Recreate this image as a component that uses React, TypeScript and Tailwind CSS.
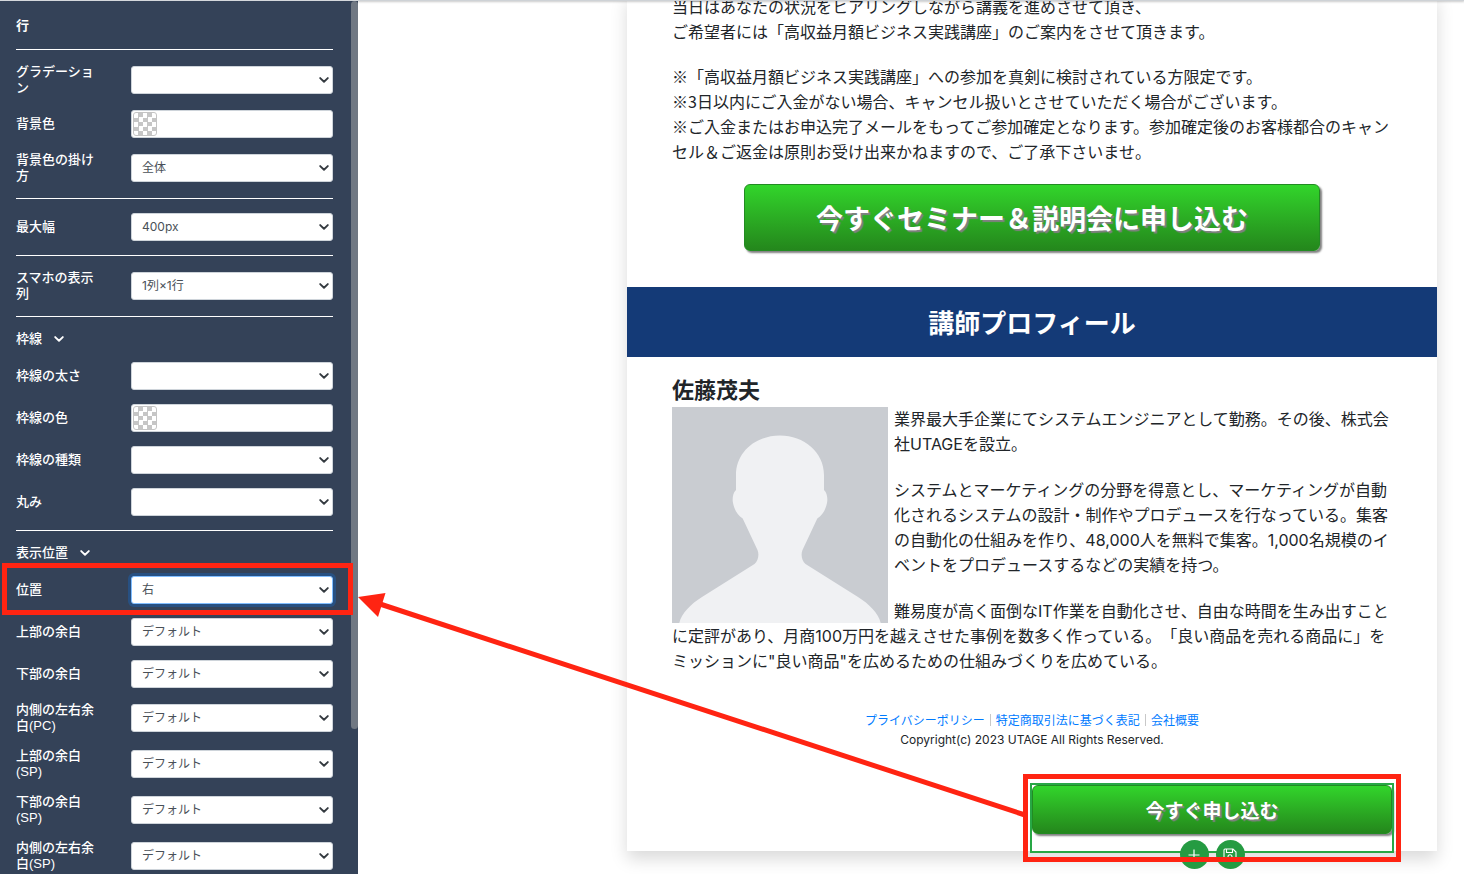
import { ReactNode, useState } from 'react'

const deviceDefault = ['デフォルト', '0px', '10px', '20px', '30px']

function Chevron({ className }: { className: string }) {
    return (
        <svg viewBox="0 0 10 6" fill="none" stroke="currentColor" strokeWidth="1.900" strokeLinecap="round" strokeLinejoin="round" className={className} aria-hidden="true">
            <path d="M1.2 1.1 5 4.7 8.8 1.1" />
        </svg>
    )
}

type FieldProps = {
    id: string
    label: string
    children: ReactNode
    marked?: boolean
}

function Field({ id, label, children, marked }: FieldProps) {
    return (
        <div className="relative mb-3.5 flex items-center">
            <label htmlFor={id} className="w-[115px] shrink-0 pr-9 text-[13px] leading-4 font-medium">{label}</label>
            <div className="relative min-w-0 flex-1">{children}</div>
            {marked && (
                <span className="pointer-events-none absolute -top-[13px] -right-5 -bottom-[11px] -left-3.5 z-20 border-5 border-[#ff2412]" />
            )}
        </div>
    )
}

type SelectFieldProps = {
    id: string
    label: string
    options: string[]
    active?: boolean
}

function SelectField({ id, label, options, active }: SelectFieldProps) {
    const [value, setValue] = useState(options[0])

    return (
        <Field id={id} label={label} marked={active}>
            <select
                id={id}
                value={value}
                onChange={(e) => setValue(e.target.value)}
                className={active
                    ? "block h-7 w-full appearance-none rounded-[3px] border border-[#80bdff] bg-white pr-6 pl-2.5 font-['Inter','Noto_Sans_CJK_JP',sans-serif] text-xs text-[#495057] ring-3 ring-[#007bff]/25 outline-none"
                    : "block h-7 w-full appearance-none rounded-[3px] border border-[#ced4da] bg-white pr-6 pl-2.5 font-['Inter','Noto_Sans_CJK_JP',sans-serif] text-xs text-[#495057] outline-none"}
            >
                {options.map((option) => (
                    <option key={option} value={option}>{option}</option>
                ))}
            </select>
            <Chevron className="pointer-events-none absolute top-[11px] right-1 h-1.5 w-2.5 text-[#343a40]" />
        </Field>
    )
}

function ColorField({ id, label }: { id: string, label: string }) {
    return (
        <Field id={id} label={label}>
            <input id={id} type="text" className="block h-7 w-full rounded-[3px] border border-[#ced4da] bg-white pr-2.5 pl-8 text-xs text-[#495057] outline-none" />
            <button
                type="button"
                aria-label={`${label}を選択`}
                className="absolute top-0.5 left-0.5 size-6 rounded-[3px] border border-[#c4c4c4] bg-[repeating-conic-gradient(#c6c6c6_0_25%,#fff_0_50%)] bg-[length:9px_9px]"
            />
        </Field>
    )
}

function Divider() {
    return <hr className="mb-3.5 border-t border-white" />
}

function GroupHeading({ children }: { children: ReactNode }) {
    return (
        <h3 className="mb-[15px] text-[13px] leading-4 font-medium">
            <button type="button" className="flex items-center gap-3">
                {children}
                <Chevron className="h-1.5 w-2.5" />
            </button>
        </h3>
    )
}

function Sidebar() {
    return (
        <aside className="relative h-screen w-[358px] shrink-0 overflow-hidden border-t border-[#d5d8dc] bg-[#344258] pt-[17px] pr-[25px] pl-4 font-['Liberation_Sans','Noto_Sans_CJK_JP',sans-serif] text-white">
            <h2 className="mb-[15px] text-[13px] leading-4 font-bold">行</h2>
            <Divider />
            <SelectField id="gradation" label="グラデーション" options={['', 'あり']} />
            <ColorField id="bg-color" label="背景色" />
            <SelectField id="bg-area" label="背景色の掛け方" options={['全体', '内側']} />
            <Divider />
            <SelectField id="max-width" label="最大幅" options={['400px', '600px', '800px']} />
            <Divider />
            <SelectField id="sp-columns" label="スマホの表示列" options={['1列×1行', '2列×1行']} />
            <Divider />
            <GroupHeading>枠線</GroupHeading>
            <SelectField id="border-width" label="枠線の太さ" options={['', '1px', '2px']} />
            <ColorField id="border-color" label="枠線の色" />
            <SelectField id="border-style" label="枠線の種類" options={['', '実線', '点線']} />
            <SelectField id="radius" label="丸み" options={['', '5px', '10px']} />
            <Divider />
            <GroupHeading>表示位置</GroupHeading>
            <SelectField id="align" label="位置" options={['右', '中央', '左']} active />
            <SelectField id="mt-pc" label="上部の余白" options={deviceDefault} />
            <SelectField id="mb-pc" label="下部の余白" options={deviceDefault} />
            <SelectField id="px-pc" label="内側の左右余白(PC)" options={deviceDefault} />
            <SelectField id="mt-sp" label="上部の余白(SP)" options={deviceDefault} />
            <SelectField id="mb-sp" label="下部の余白(SP)" options={deviceDefault} />
            <SelectField id="px-sp" label="内側の左右余白(SP)" options={deviceDefault} />
            {/* scroll thumb */}
            <div className="absolute top-0 right-0 h-[728px] w-[7px] rounded-full bg-[#707883]" />
        </aside>
    )
}

function Avatar() {
    return (
        <svg viewBox="0 0 216 216" className="float-left mr-1.5 size-[216px]" role="img" aria-label="佐藤茂夫">
            <rect width="216" height="216" fill="#c9ccd1" />
            <path
                d="M108 28.5C84 28.5 64 45 64 68V83C61 86 60.5 90 60.7 94C61.5 101 65 108 70.7 111.5L85.5 143C87.5 148 86 154 82.5 157L30 190C19 197 9.500 206 7.300 216H208.700C206.500 206 197 197 186 190L133.500 157C130 154 128.500 148 130.500 143L145.300 111.500C151 108 154.500 101 155.300 94C155.500 90 155 86 152 83V68C152 45 132 28.500 108 28.500Z"
                fill="#f0f1f3"
            />
        </svg>
    )
}

function Preview() {
    return (
        <main className="relative flex h-screen min-w-0 flex-1 items-start justify-end overflow-hidden pr-[27px] pl-4">
            <div className="absolute inset-x-0 top-0 z-10 h-px bg-[#ced2d6] shadow-[0_1px_2px_rgba(0,0,0,0.3)]" />
            <article className="-mt-1.5 w-full max-w-[810px] bg-white text-base leading-[25px] text-[#212529] shadow-[0_8px_16px_rgba(0,0,0,0.15)] [text-spacing-trim:space-all]">
                <section className="px-[45px]">
                    <p className="mb-5">
                        当日はあなたの状況をヒアリングしながら講義を進めさせて頂き、<br />
                        ご希望者には「高収益月額ビジネス実践講座」のご案内をさせて頂きます。
                    </p>
                    <p>
                        ※「高収益月額ビジネス実践講座」への参加を真剣に検討されている方限定です。<br />
                        ※3日以内にご入金がない場合、キャンセル扱いとさせていただく場合がございます。<br />
                        ※ご入金またはお申込完了メールをもってご参加確定となります。参加確定後のお客様都合のキャンセル＆ご返金は原則お受け出来かねますので、ご了承下さいませ。
                    </p>
                    <button
                        type="button"
                        className="mx-auto mt-5 mb-9 block h-[67px] w-4/5 rounded-md border border-[#228b22] bg-linear-to-b from-[#32d52b] to-[#24871c] text-[27px] leading-none font-bold text-white shadow-[2px_2px_2px_#808080] [text-shadow:2px_2px_1px_#808080]"
                    >
                        今すぐセミナー＆説明会に申し込む
                    </button>
                </section>

                <h2 className="flex h-[70px] items-center justify-center bg-[#143a77] pb-0.5 text-[26px] font-bold text-white">講師プロフィール</h2>

                <section className="px-[45px] pt-4">
                    <h3 className="mb-1 text-[22px] leading-[30px] font-bold">佐藤茂夫</h3>
                    <Avatar />
                    <div className="font-['Inter','Noto_Sans_CJK_JP',sans-serif]">
                        <p className="mb-[21px]">
                            業界最大手企業にてシステムエンジニアとして勤務。その後、株式会社UTAGEを設立。
                        </p>
                        <p className="mb-[21px]">
                            システムとマーケティングの分野を得意とし、マーケティングが自動化されるシステムの設計・制作やプロデュースを行なっている。集客の自動化の仕組みを作り、48,000人を無料で集客。1,000名規模のイベントをプロデュースするなどの実績を持つ。
                        </p>
                        <p>
                            難易度が高く面倒なIT作業を自動化させ、自由な時間を生み出すことに定評があり、月商100万円を越えさせた事例を数多く作っている。「良い商品を売れる商品に」をミッションに"良い商品"を広めるための仕組みづくりを広めている。
                        </p>
                    </div>
                </section>

                <footer className="mt-9 text-center text-xs leading-5">
                    <nav className="flex items-center justify-center text-[#007bff]">
                        <a href="#privacy">プライバシーポリシー</a>
                        <span className="mx-[5px] h-3 w-px bg-[#c8c8c8]" />
                        <a href="#law">特定商取引法に基づく表記</a>
                        <span className="mx-[5px] h-3 w-px bg-[#c8c8c8]" />
                        <a href="#company">会社概要</a>
                    </nav>
                    <p className="font-['Inter','Noto_Sans_CJK_JP',sans-serif]">Copyright(c) 2023 UTAGE All Rights Reserved.</p>
                </footer>

                <section className="flex justify-end px-[45px] pt-[35px]">
                    <div className="relative h-[66px] w-1/2 outline-2 outline-[#28a745]">
                        <button
                            type="button"
                            className="block h-[49px] w-full rounded-md border border-[#228b22] bg-linear-to-b from-[#32d52b] to-[#24871c] text-[19px] leading-none font-bold text-white shadow-[2px_2px_2px_#808080] [text-shadow:2px_2px_1px_#808080]"
                        >
                            今すぐ申し込む
                        </button>
                        <div className="absolute inset-x-0 -bottom-[18px] flex justify-center gap-[7px]">
                            <button type="button" aria-label="追加" className="flex size-[29px] items-center justify-center rounded-full bg-[#259b42] text-white">
                                <svg viewBox="0 0 12 12" className="size-3" stroke="currentColor" strokeWidth="1.200" aria-hidden="true">
                                    <path d="M6 0.500V11.500M0.500 6H11.500" />
                                </svg>
                            </button>
                            <button type="button" aria-label="保存" className="flex size-[29px] items-center justify-center rounded-full bg-[#259b42] text-white">
                                <svg viewBox="0 0 14 14" className="size-3.5" fill="none" stroke="currentColor" strokeWidth="1.100" aria-hidden="true">
                                    <path d="M2 1H10L13 4V12Q13 13 12 13H2Q1 13 1 12V2Q1 1 2 1ZM3.500 1V4.500H9.500V1" />
                                    <circle cx="7" cy="8.700" r="2" />
                                </svg>
                            </button>
                        </div>
                        <span className="pointer-events-none absolute -top-[11px] -right-[9px] -bottom-[11px] -left-[9px] z-20 border-5 border-[#ff2412]" />
                    </div>
                </section>
            </article>
        </main>
    )
}

export default function App() {
    return (
        <div className="relative flex h-screen overflow-hidden bg-white font-['Noto_Sans_CJK_JP',sans-serif]" lang="ja">
            <Sidebar />
            <Preview />
            <svg viewBox="0 0 667 230" className="pointer-events-none absolute top-[590px] left-[358px] z-30 h-[230px] w-[667px]" fill="#ff2412" aria-hidden="true">
                <path d="M22 14 667 225" stroke="#ff2412" strokeWidth="5" />
                <path d="M0 7 27.500 3 20 27Z" />
            </svg>
        </div>
    )
}
